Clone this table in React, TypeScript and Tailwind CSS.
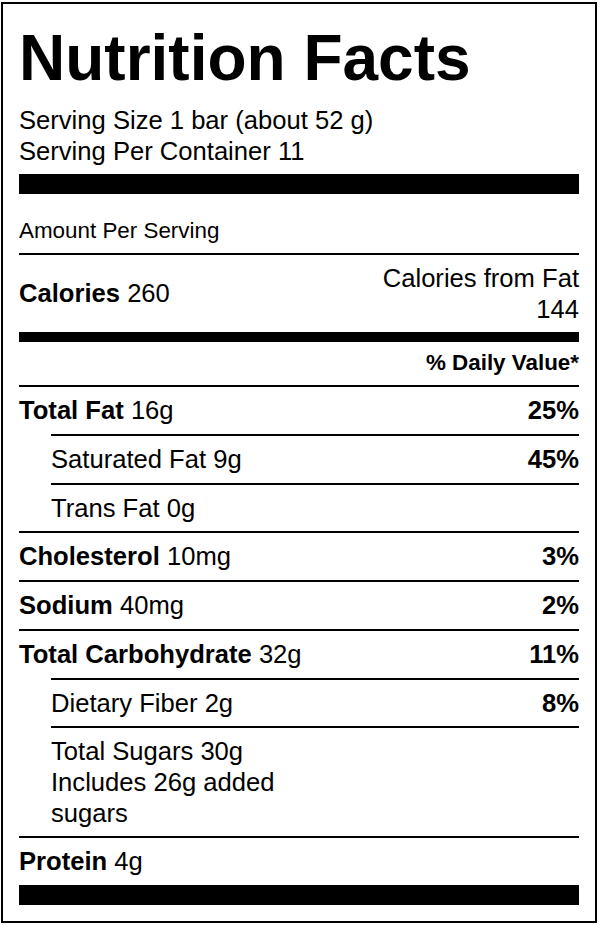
const font = { fontFamily: '"Liberation Sans", Arial, Helvetica, sans-serif' };

type Row = {
  name: string;
  amount: string;
  dv?: string;
  sub?: boolean;
};

const rows: Row[] = [
  { name: "Total Fat", amount: "16g", dv: "25%" },
  { name: "Saturated Fat", amount: "9g", dv: "45%", sub: true },
  { name: "Trans Fat", amount: "0g", sub: true },
  { name: "Cholesterol", amount: "10mg", dv: "3%" },
  { name: "Sodium", amount: "40mg", dv: "2%" },
  { name: "Total Carbohydrate", amount: "32g", dv: "11%" },
  { name: "Dietary Fiber", amount: "2g", dv: "8%", sub: true },
];

function NutrientRow({ row }: { row: Row }) {
  return (
    <div
      className={`flex justify-between border-t-2 border-black py-2 ${row.sub ? "ml-8" : ""}`}
    >
      <span>
        {row.sub ? (
          <>
            {row.name} {row.amount}
          </>
        ) : (
          <>
            <b className="font-bold">{row.name}</b> {row.amount}
          </>
        )}
      </span>
      {row.dv && <b className="font-bold">{row.dv}</b>}
    </div>
  );
}

export default function App() {
  return (
    <div className="min-h-[926px] bg-white pl-[1px] pt-[2px]" style={font}>
      <section className="w-[596px] border-2 border-black p-4 text-black text-[25.6px] leading-[1.2]">
        <h1 className="text-[64px] font-bold leading-[1.2] mb-2">Nutrition Facts</h1>
        <p>Serving Size 1 bar (about 52 g)</p>
        <p>Serving Per Container 11</p>

        <div className="h-5 bg-black mt-2" />

        <p className="text-[22.4px] pt-6 pb-2">Amount Per Serving</p>

        <div className="flex justify-between border-t-2 border-black py-2 border-b-[10px]">
          <span className="self-center">
            <b className="font-bold">Calories</b> 260
          </span>
          <span className="max-w-[220px] text-right">Calories from Fat 144</span>
        </div>

        <p className="text-[22.4px] font-bold text-right py-2">% Daily Value*</p>

        {rows.map((r) => (
          <NutrientRow key={r.name} row={r} />
        ))}

        <div className="ml-8 border-t-2 border-black py-2">
          <p className="max-w-[250px]">
            Total Sugars 30g
            <br />
            Includes 26g added sugars
          </p>
        </div>

        <div className="border-t-2 border-black py-2">
          <b className="font-bold">Protein</b> 4g
        </div>

        <div className="h-5 bg-black" />
      </section>
    </div>
  );
}
